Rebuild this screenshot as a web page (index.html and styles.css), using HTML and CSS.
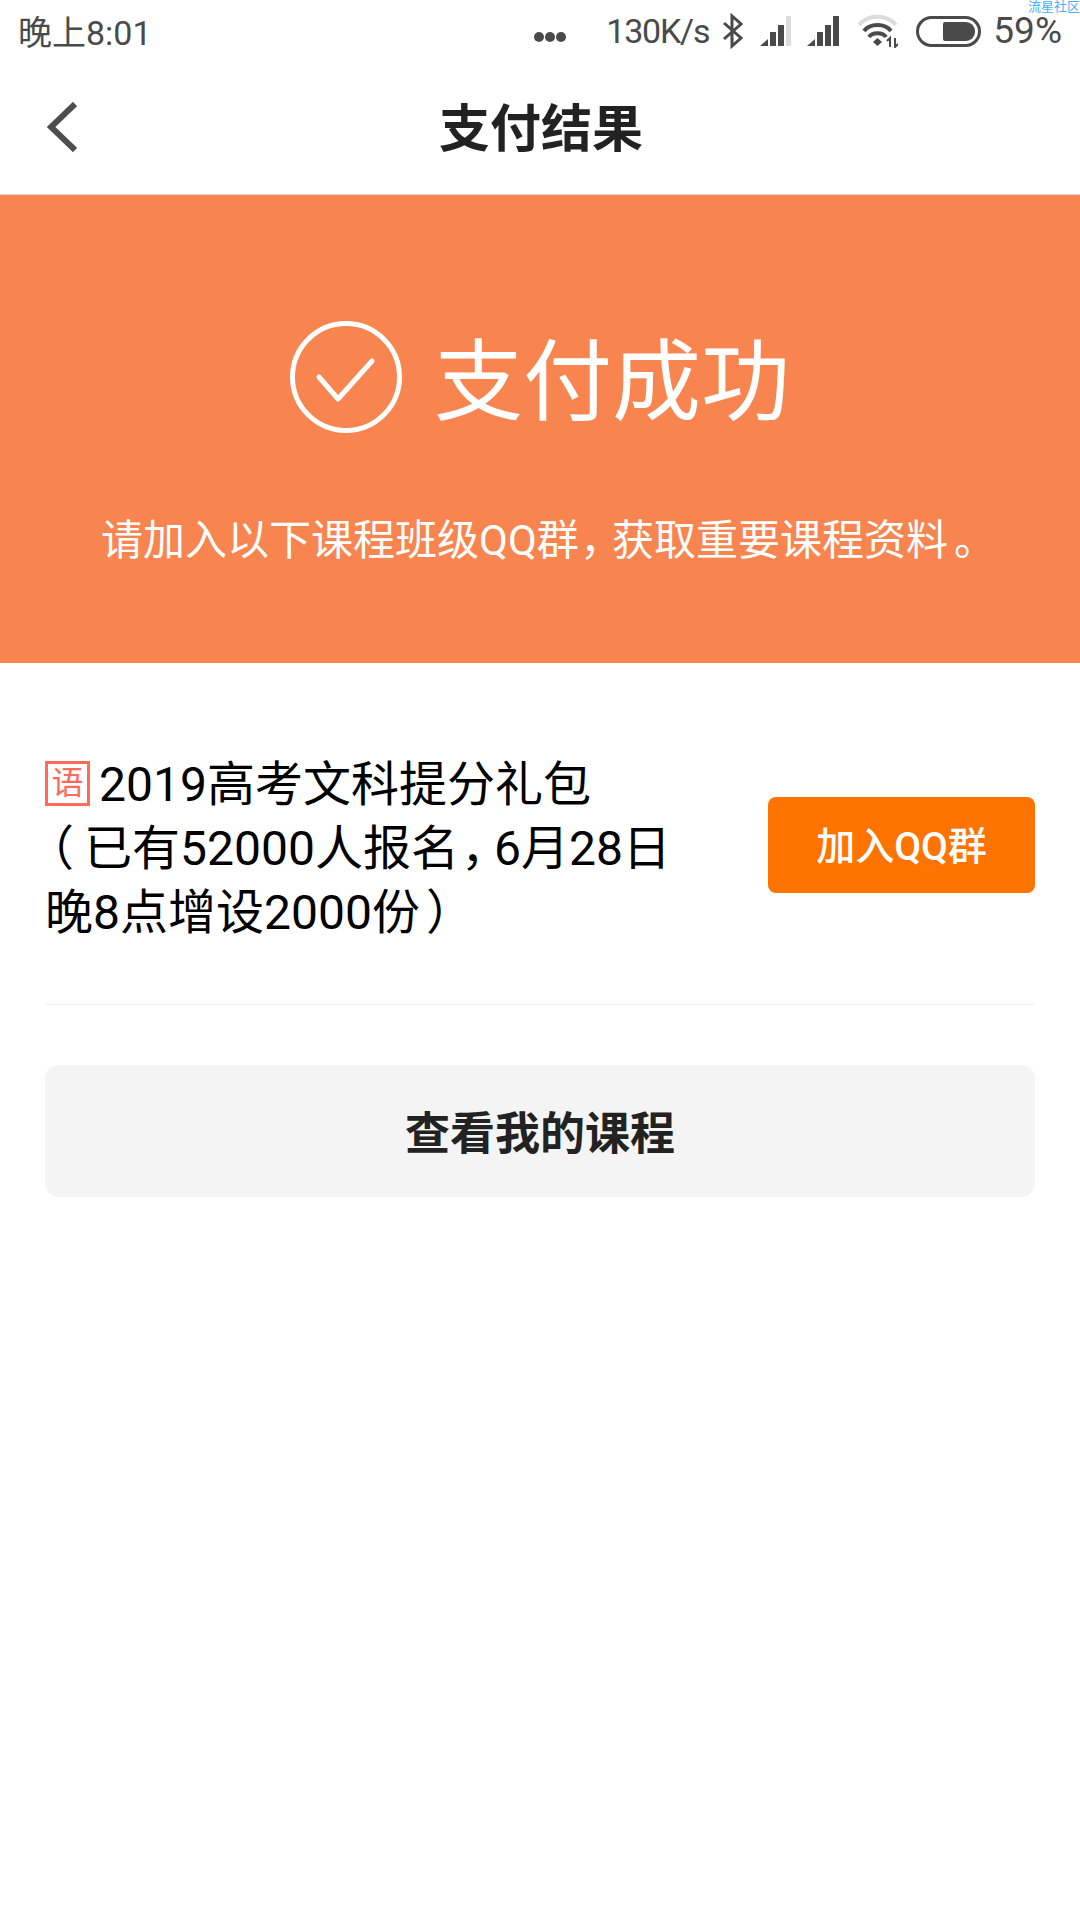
FILE: index.html
```html
<!DOCTYPE html>
<html lang="zh-CN">
<head>
    <meta charset="UTF-8">
    <meta name="viewport" content="width=device-width, initial-scale=1.0">
    <title>支付结果</title>
    <link rel="stylesheet" href="styles.css">
</head>
<body>
    <div class="page">
        <div class="status-bar">
            <span class="status-time">晚上8:01</span>
            <div class="status-right">
                <svg class="icon-dots" width="34" height="12" viewBox="0 0 34 12">
                    <circle cx="6" cy="6" r="5" fill="#4a4a4a"/>
                    <circle cx="17" cy="6" r="5" fill="#4a4a4a"/>
                    <circle cx="28" cy="6" r="5" fill="#4a4a4a"/>
                </svg>
                <span class="status-speed">130K/s</span>
                <svg class="icon-bt" width="21" height="36" viewBox="0 0 21 36">
                    <path d="M2 10 L19 25 L10 33 L10 3 L19 11 L2 26" fill="none" stroke="#4a4a4a" stroke-width="3"/>
                </svg>
                <svg class="icon-signal" width="31" height="30" viewBox="0 0 31 30">
                    <path d="M0 30 L8 23 V30 Z" fill="#4a4a4a"/>
                    <rect x="10" y="16" width="6" height="14" fill="#4a4a4a"/>
                    <rect x="18" y="9" width="6" height="21" fill="#4a4a4a"/>
                    <rect x="26" y="0" width="5" height="30" fill="#dcdcdc"/>
                </svg>
                <svg class="icon-signal" width="32" height="30" viewBox="0 0 32 30">
                    <path d="M0 30 L8 23 V30 Z" fill="#4a4a4a"/>
                    <rect x="10" y="16" width="6" height="14" fill="#4a4a4a"/>
                    <rect x="18" y="9" width="6" height="21" fill="#4a4a4a"/>
                    <rect x="26" y="0" width="6" height="30" fill="#4a4a4a"/>
                </svg>
                <svg class="icon-wifi" width="41" height="34" viewBox="0 0 41 34">
                    <path d="M2 11 C11 0 30 0 39 11" fill="none" stroke="#dcdcdc" stroke-width="4"/>
                    <path d="M7 17 C13 9 28 9 34 17" fill="none" stroke="#4a4a4a" stroke-width="4"/>
                    <path d="M12 23 C15 18 26 18 29 23" fill="none" stroke="#4a4a4a" stroke-width="4"/>
                    <path d="M16 28 L20.5 24 L25 28 L20.5 32 Z" fill="#4a4a4a"/>
                    <path d="M33 33 V24 L30 27 M38 24 V33 L41 30" fill="none" stroke="#4a4a4a" stroke-width="2"/>
                </svg>
                <div class="battery"><div class="battery-level"></div></div>
                <span class="status-percent">59%</span>
            </div>
            <span class="watermark">流星社区</span>
        </div>

        <div class="nav-bar">
            <svg class="back-icon" width="30" height="50" viewBox="0 0 30 50">
                <path d="M28 2 L4 25 L28 48" fill="none" stroke="#4d4d4d" stroke-width="6"/>
            </svg>
            <h1>支付结果</h1>
        </div>

        <div class="banner">
            <div class="banner-title">
                <svg width="112" height="112" viewBox="0 0 112 112">
                    <circle cx="56" cy="56" r="53.5" fill="none" stroke="#fff" stroke-width="5"/>
                    <path d="M29 56 L48 78 L82 40" fill="none" stroke="#fff" stroke-width="5" stroke-linecap="round" stroke-linejoin="round"/>
                </svg>
                <span>支付成功</span>
            </div>
            <p>请加入以下课程班级QQ群<span class="comma-sub">，</span>获取重要课程资料<span class="period">。</span></p>
        </div>

        <div class="content">
            <div class="course">
                <div class="course-name">
                    <span class="subject-tag">语</span>2019高考文科提分礼包<br>
                    <span class="paren-open">（</span>已有52000人报名<span class="comma">，</span>6月28日<br>
                    晚8点增设2000份<span class="paren-close">）</span>
                </div>
                <button class="join-btn">加入QQ群</button>
            </div>
            <button class="my-course-btn">查看我的课程</button>
        </div>
    </div>
</body>
</html>
```

FILE: styles.css
```css
* {
    margin: 0;
    padding: 0;
    box-sizing: border-box;
}

body {
    font-family: Roboto, 'Noto Sans CJK SC', sans-serif;
    background: white;
    color: #000;
}

.page {
    width: 1080px;
    height: 1920px;
    overflow: hidden;
}

.status-bar {
    height: 62px;
    padding: 0 18px;
    display: flex;
    align-items: center;
    justify-content: space-between;
    color: #4a4a4a;
    font-size: 34px;
    position: relative;
}

.status-time {
    margin-bottom: 2px;
}

.status-right {
    display: flex;
    align-items: center;
}

.icon-dots {
    margin-right: 39px;
    margin-top: 12px;
}

.status-speed {
    letter-spacing: -1.2px;
    margin-right: 13px;
}

.icon-bt {
    margin-right: 17px;
}

.icon-signal {
    margin-right: 16px;
}

.icon-wifi {
    margin-left: 2px;
    margin-right: 18px;
}

.battery {
    width: 65px;
    height: 31px;
    border: 3.5px solid #4a4a4a;
    border-radius: 16px;
    padding: 3px;
    display: flex;
    justify-content: flex-end;
    margin-right: 12px;
}

.battery-level {
    width: 32px;
    background: #4a4a4a;
    border-radius: 2px 9px 9px 2px;
}

.status-percent {
    font-size: 37px;
    line-height: 30px;
}

.watermark {
    position: absolute;
    top: 0;
    right: 0;
    font-size: 13px;
    line-height: 14px;
    color: #4aaef5;
}

.nav-bar {
    height: 133px;
    padding: 0 47px;
    display: flex;
    align-items: center;
    position: relative;
    border-bottom: 1px solid #d8d8d8;
}

.back-icon {
    margin-top: -3px;
}

.nav-bar h1 {
    position: absolute;
    top: 33px;
    left: 2px;
    right: 0;
    text-align: center;
    font-size: 51px;
    line-height: 70px;
    font-weight: 700;
    color: #222;
}

.banner {
    height: 468px;
    background: #f8854f;
    color: white;
    display: flex;
    flex-direction: column;
    align-items: center;
    padding-top: 126px;
}

.banner-title {
    display: flex;
    align-items: center;
    gap: 32px;
}

.banner-title span {
    font-size: 89px;
    font-weight: 400;
    line-height: 112px;
    padding-top: 6px;
    height: 112px;
}

.banner p {
    margin-top: 79px;
    padding-left: 17px;
    font-size: 42px;
    line-height: 58px;
}

/* 标点只取半宽，再补一点间距 */
.comma,
.comma-sub,
.paren-open,
.paren-close {
    font-feature-settings: "halt";
}

.comma {
    margin-left: 2px;
    margin-right: 9px;
}

.comma-sub {
    margin-left: 1px;
    margin-right: 11px;
}

.period {
    margin-left: 6px;
}

.paren-open {
    margin-left: 5px;
    margin-right: 10px;
}

.paren-close {
    margin-left: 6px;
}

.content {
    padding: 0 45px;
}

.course {
    display: flex;
    align-items: center;
    justify-content: space-between;
    height: 342px;
    padding-top: 24px;
    border-bottom: 1px solid #eee;
}

.course-name {
    width: 700px;
    font-size: 48px;
    line-height: 64px;
    margin-top: 6px;
}

.subject-tag {
    display: inline-block;
    width: 45px;
    height: 45px;
    line-height: 39px;
    border: 3px solid #ff6a5a;
    color: #ff6a5a;
    font-size: 32px;
    text-align: center;
    margin-right: 9px;
    vertical-align: -5px;
    overflow: hidden;
}

.join-btn {
    flex-shrink: 0;
    width: 267px;
    height: 96px;
    margin-top: -2px;
    padding-bottom: 4px;
    border: none;
    border-radius: 8px;
    background: #ff7400;
    color: white;
    font-family: inherit;
    font-size: 39px;
    font-weight: 500;
}

.my-course-btn {
    display: block;
    width: 100%;
    height: 132px;
    margin-top: 60px;
    padding-bottom: 2px;
    border: none;
    border-radius: 14px;
    background: #f4f4f4;
    color: #222;
    font-family: inherit;
    font-size: 45px;
    font-weight: 700;
}
```
